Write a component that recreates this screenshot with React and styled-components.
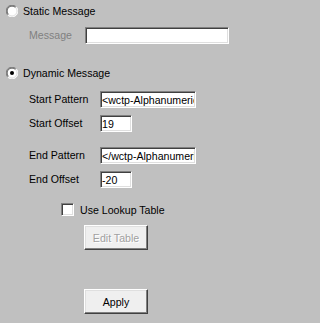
import React from "react";
import styled, { createGlobalStyle } from "styled-components";

const Global = createGlobalStyle`
  html, body { margin: 0; padding: 0; background: #c0c0c0; }
  body { font-family: "Liberation Sans", Arial, sans-serif; font-size: 10.6px; color: #000; }
`;

const Dialog = styled.div`
  width: 236px;
  height: 323px;
  box-sizing: border-box;
  padding: 5px 0 0 6px;
  display: flex;
  flex-direction: column;
`;

const OptionRow = styled.label`
  display: flex;
  align-items: center;
  gap: 5px;
  height: 12px;
  line-height: 12px;
  margin-top: ${(p) => p.$top || 0}px;
`;

const RadioCircle = styled.span`
  width: 12px;
  height: 12px;
  flex: none;
  display: flex;
`;

const Radio = ({ checked }) => (
  <RadioCircle>
    <svg width="12" height="12" viewBox="0 0 12 12">
      <circle cx="6" cy="6" r="5.5" fill="#fff" />
      <path d="M1.8 10.2 A5.5 5.5 0 0 1 10.2 1.8" fill="none" stroke="#808080" strokeWidth="1" />
      <path d="M10.2 1.8 A5.5 5.5 0 0 1 1.8 10.2" fill="none" stroke="#ffffff" strokeWidth="1" />
      <path d="M2.5 9.5 A4.6 4.6 0 0 1 9.5 2.5" fill="none" stroke="#404040" strokeWidth="0.9" />
      <path d="M9.5 2.5 A4.6 4.6 0 0 1 2.5 9.5" fill="none" stroke="#dfdfdf" strokeWidth="0.9" />
      {checked && <circle cx="6" cy="6" r="2" fill="#000" />}
    </svg>
  </RadioCircle>
);

const FieldRow = styled.div`
  display: flex;
  align-items: center;
  height: 17px;
  padding-left: 23px;
  margin-top: ${(p) => p.$top || 0}px;
`;

const Label = styled.span`
  width: ${(p) => p.$w}px;
  flex: none;
  color: ${(p) => (p.$disabled ? "#808080" : "#000")};
  line-height: 13px;
`;

const TextBox = styled.input`
  box-sizing: border-box;
  width: ${(p) => p.$w}px;
  height: 17px;
  margin: 0;
  padding: 0 1px;
  font-family: "Liberation Sans", Arial, sans-serif;
  font-size: 10.6px;
  color: #000;
  background: #fff;
  border: 1px solid;
  border-color: #808080 #ffffff #ffffff #808080;
  box-shadow: inset 1px 1px 0 #404040, inset -1px -1px 0 #dfdfdf;
  outline: none;
`;

const CheckRow = styled.label`
  display: flex;
  align-items: center;
  gap: 6px;
  height: 13px;
  margin-top: 15px;
  padding-left: 55px;
`;

const CheckBox = styled.span`
  box-sizing: border-box;
  width: 13px;
  height: 13px;
  flex: none;
  background: #fff;
  border: 1px solid;
  border-color: #808080 #ffffff #ffffff #808080;
  box-shadow: inset 1px 1px 0 #404040, inset -1px -1px 0 #dfdfdf;
`;

const Button = styled.button`
  box-sizing: border-box;
  width: 64px;
  height: 25px;
  margin: ${(p) => p.$top}px 0 0 78px;
  padding: 0;
  font-family: "Liberation Sans", Arial, sans-serif;
  font-size: 10.6px;
  background: #efefef;
  border: 1px solid;
  border-color: #ffffff #404040 #404040 #ffffff;
  box-shadow: inset -1px -1px 0 #808080, inset 1px 1px 0 #dfdfdf;
  color: ${(p) => (p.disabled ? "#a0a0a0" : "#000")};
  text-shadow: ${(p) => (p.disabled ? "1px 1px 0 #ffffff" : "none")};
`;

export default function App() {
  return (
    <>
      <Global />
      <Dialog>
        <OptionRow>
          <Radio />
          <span>Static Message</span>
        </OptionRow>
        <FieldRow $top={10}>
          <Label $w={56} $disabled>Message</Label>
          <TextBox $w={144} defaultValue="" readOnly />
        </FieldRow>

        <OptionRow $top={23}>
          <Radio checked />
          <span>Dynamic Message</span>
        </OptionRow>
        <FieldRow $top={12}>
          <Label $w={71}>Start Pattern</Label>
          <TextBox $w={96} defaultValue="<wctp-AlphanumericMessage>" readOnly />
        </FieldRow>
        <FieldRow $top={7}>
          <Label $w={71}>Start Offset</Label>
          <TextBox $w={32} defaultValue="19" readOnly />
        </FieldRow>
        <FieldRow $top={15}>
          <Label $w={71}>End Pattern</Label>
          <TextBox $w={96} defaultValue="</wctp-AlphanumericMessage>" readOnly />
        </FieldRow>
        <FieldRow $top={7}>
          <Label $w={71}>End Offset</Label>
          <TextBox $w={32} defaultValue="-20" readOnly />
        </FieldRow>

        <CheckRow>
          <CheckBox />
          <span>Use Lookup Table</span>
        </CheckRow>
        <Button $top={9} disabled>Edit Table</Button>
        <Button $top={39}>Apply</Button>
      </Dialog>
    </>
  );
}
